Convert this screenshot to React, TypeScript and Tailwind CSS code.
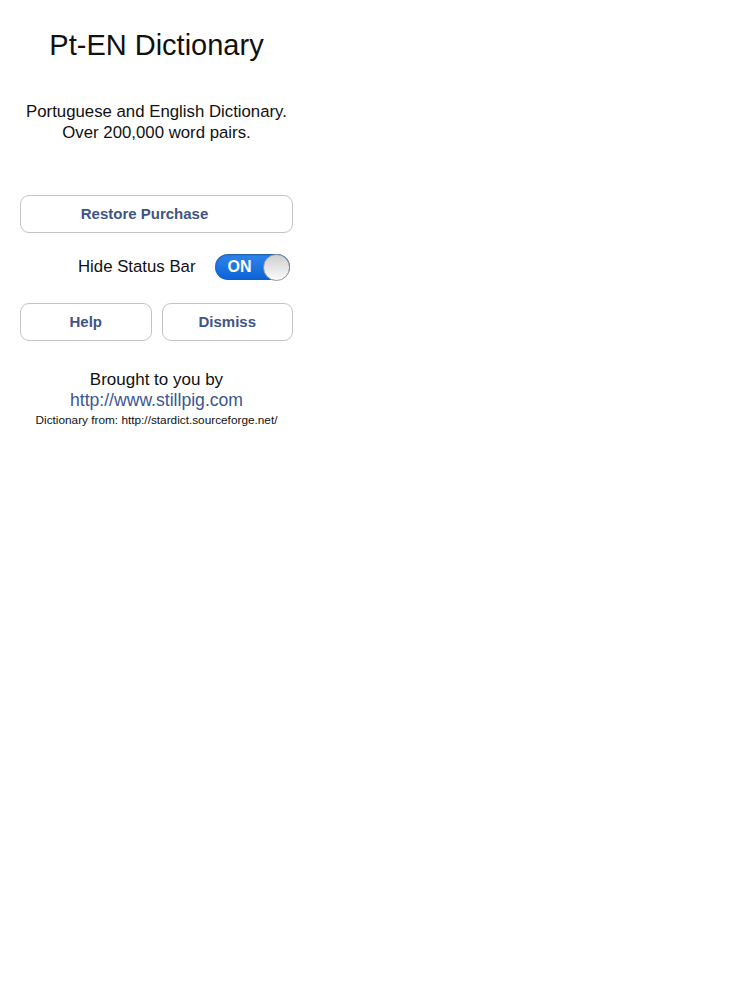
import React from "react";

export default function App() {
  return (
    <div className="min-h-[1000px] w-[750px] bg-white" style={{ fontFamily: '"Liberation Sans", Arial, sans-serif' }}>
      <div className="flex w-[313px] flex-col items-center">
        <h1 className="pt-[28px] text-[29px] leading-[35px] text-[#111]">Pt-EN Dictionary</h1>
        <p className="mt-[38px] text-center text-[16.8px] leading-[21px] text-[#111]">
          Portuguese and English Dictionary.
          <br />
          Over 200,000 word pairs.
        </p>
        <button className="mt-[52px] h-[38px] w-[273px] rounded-[9px] border border-[#c4c4c4] bg-white pr-[24px] text-[15px] font-bold text-[#3f5585]">
          Restore Purchase
        </button>
        <div className="mt-[21px] flex w-full items-center pl-[78px]">
          <span className="text-[16.8px] leading-[20px] text-[#111]">Hide Status Bar</span>
          <div className="ml-[19px] flex h-[26px] w-[75px] items-center rounded-full bg-gradient-to-b from-[#2f86ec] to-[#0a62d6] shadow-[inset_0_1px_2px_rgba(0,0,0,0.35)]">
            <span className="ml-[13px] text-[16px] font-bold text-white">ON</span>
            <div className="ml-auto h-[27px] w-[27px] rounded-full border border-[#9a9a9a] bg-gradient-to-b from-[#cfcfcf] to-[#fbfbfb]" />
          </div>
        </div>
        <div className="mt-[23px] flex w-[273px] gap-[10px]">
          <button className="h-[38px] flex-1 rounded-[9px] border border-[#c4c4c4] bg-white text-[15px] font-bold text-[#3f5585]">
            Help
          </button>
          <button className="h-[38px] flex-1 rounded-[9px] border border-[#c4c4c4] bg-white text-[15px] font-bold text-[#3f5585]">
            Dismiss
          </button>
        </div>
        <p className="mt-[29px] text-[17px] leading-[20px] text-[#111]">Brought to you by</p>
        <a className="text-[17.6px] leading-[20px] text-[#3b5694]">http://www.stillpig.com</a>
        <p className="mt-[3px] text-[11.8px] leading-[14px] text-[#111]">Dictionary from: http://stardict.sourceforge.net/</p>
      </div>
    </div>
  );
}
